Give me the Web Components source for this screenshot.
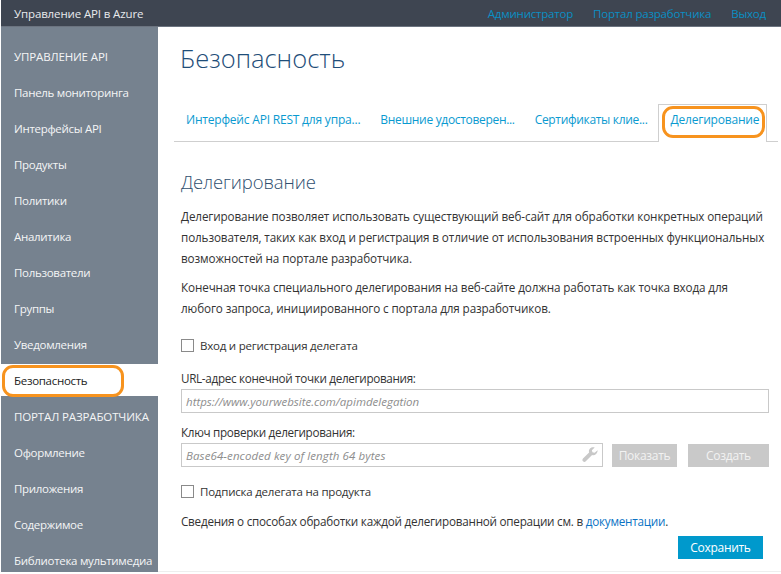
<!DOCTYPE html>
<html lang="ru"><head><meta charset="utf-8"><title>Безопасность</title>
<style>
html,body{margin:0;padding:0;background:#fff;overflow:hidden}
body{width:781px;height:574px;font-family:"Open Sans","Noto Sans",sans-serif;font-size:12px;color:#333}
</style></head><body>
<api-app></api-app>
<script>
function def(name, html){
  customElements.define(name, class extends HTMLElement{
    constructor(){super();const t=document.createElement('template');t.innerHTML=html;this.attachShadow({mode:'open'}).appendChild(t.content.cloneNode(true));}
  });
}
def('top-bar',`<style>
:host{display:flex;justify-content:space-between;align-items:center;height:26px;background:#3e4551;border-bottom:1px solid #6c7480;padding:0 15px 0 13px;font-size:11.5px;letter-spacing:-.13px;color:#e8eaed;margin-left:1px;box-sizing:content-box}
nav{display:flex;gap:20px;color:#0a8fc4;letter-spacing:-.2px}
</style><span>Управление API в Azure</span><nav><span>Администратор</span><span>Портал разработчика</span><span>Выход</span></nav>`);
def('side-nav',`<style>
:host{display:block;width:157px;margin-left:1px;height:545px;background:#76828f;color:#f4f5f6;font-size:11.5px;letter-spacing:-.3px;overflow:hidden;padding-top:12px;box-sizing:border-box}
div{height:36px;line-height:36px;padding-left:13px;white-space:nowrap}
.h{letter-spacing:-.13px}
.a{background:#fff;color:#222;height:32px;line-height:34px;margin-top:1px;margin-bottom:3px;position:relative}
.a i{position:absolute;left:1px;top:1px;width:116px;height:26px;border:3px solid #f7931e;border-radius:11px}
</style>
<div class="h">УПРАВЛЕНИЕ API</div><div>Панель мониторинга</div><div>Интерфейсы API</div><div>Продукты</div><div>Политики</div><div>Аналитика</div><div>Пользователи</div><div>Группы</div><div>Уведомления</div>
<div class="a">Безопасность<i></i></div>
<div class="h">ПОРТАЛ РАЗРАБОТЧИКА</div><div>Оформление</div><div>Приложения</div><div>Содержимое</div><div>Библиотека мультимедиа</div>`);
def('tab-strip',`<style>
:host{display:flex;gap:20px;height:37px;border-bottom:1px solid #cfcfcf;margin:0 3px 0 16px;padding-left:12px;font-size:12px;letter-spacing:-.2px;color:#0a9ad0;box-sizing:content-box}
span{display:block;line-height:31px;white-space:nowrap}
.t{border:1px solid #cfcfcf;border-bottom:0;background:#fff;height:38px;margin:0 0 -1px -9px;box-sizing:border-box;padding:0 7px 0 11px;line-height:30px;position:relative}
.t i{position:absolute;left:3px;top:1px;width:97px;height:26px;border:3px solid #f7931e;border-radius:11px}
</style>
<span>Интерфейс API REST для упра...</span><span style="letter-spacing:-.32px">Внешние удостоверен...</span><span style="letter-spacing:-.32px">Сертификаты клие...</span><span class="t">Делегирование<i></i></span>`);
def('check-row',`<style>
:host{display:flex;align-items:center;gap:6px;height:16px;font-size:11.5px;letter-spacing:-.22px}
b{width:11px;height:11px;border:1px solid #8a8a8a;background:#fff;display:block}
</style><b></b><slot></slot>`);
def('text-box',`<style>
:host{display:flex;align-items:center;box-sizing:border-box;height:24px;border:1px solid #c9c9c9;padding:0 4px;font-style:italic;color:#8d8d8d;font-size:11.5px;letter-spacing:.05px}
span{flex:1}
</style><span><slot></slot></span><slot name="icon"></slot>`);
def('flat-btn',`<style>
:host{display:flex;align-items:center;justify-content:center;height:23px;background:#c9c9c9;color:#f2f2f2;font-size:12px;letter-spacing:-.3px}
</style><slot></slot>`);
def('del-form',`<style>
:host{display:block;padding:0 12px 0 23px;font-size:11.7px;letter-spacing:-.12px;color:#333}
h2{font-weight:300;font-size:18.5px;letter-spacing:-.1px;color:#2f4f6f;margin:0;line-height:26px;padding-top:27px}
p{margin:0;line-height:21px;white-space:nowrap}
.p1{margin-top:11px}.p2{margin-top:8px}
check-row{margin-top:18px}
label{display:block;margin:11px 0 3px;line-height:16px;letter-spacing:-.32px}
.key{display:flex}
.key text-box{flex:none;width:422px;margin-right:9px}
.key flat-btn{margin-top:1px}
a{color:#0a73c4}
.save{display:flex;justify-content:flex-end;padding-right:6px;margin-top:7px}
.info{margin-top:14px;line-height:16px;white-space:nowrap;letter-spacing:-.24px}
</style>
<h2>Делегирование</h2>
<p class="p1">Делегирование позволяет использовать существующий веб-сайт для обработки конкретных операций<br>пользователя, таких как вход и регистрация в отличие от использования встроенных функциональных<br>возможностей на портале разработчика.</p>
<p class="p2">Конечная точка специального делегирования на веб-сайте должна работать как точка входа для<br>любого запроса, инициированного с портала для разработчиков.</p>
<check-row>Вход и регистрация делегата</check-row>
<label style="margin-top:17px">URL-адрес конечной точки делегирования:</label>
<text-box style="letter-spacing:0">https://www.yourwebsite.com/apimdelegation</text-box>
<label>Ключ проверки делегирования:</label>
<div class="key"><text-box style="letter-spacing:.1px">Base64-encoded key of length 64 bytes<svg slot="icon" width="16" height="16" viewBox="0 0 16 16"><path fill="#c8c8c8" d="M15.6 3.2l-3 2.6-2.2-.5-.5-2 2.8-2.8C11 0 9.2.3 8 1.500 6.900 2.600 6.700 4.100 7.100 5.400L1 11.500c-.8.800-.8 2 0 2.800.8.8 2 .8 2.800 0l6.300-6.300c1.300.4 2.900.1 4-1 1.100-1.100 1.700-3 1.500-3.800z"/></svg></text-box><flat-btn style="width:65px;margin-right:11px">Показать</flat-btn><flat-btn style="width:81px">Создать</flat-btn></div>
<check-row style="margin-top:16px">Подписка делегата на продукта</check-row>
<div class="info">Сведения о способах обработки каждой делегированной операции см. в <a>документации</a>.</div>
<div class="save"><flat-btn style="width:85px;background:#0099cc;color:#fff">Сохранить</flat-btn></div>`);
def('api-app',`<style>
:host{display:block;width:781px;height:574px}
.row{display:flex;height:547px}
main{flex:1;min-width:0;box-sizing:border-box;border-bottom:1px solid #eee;height:545px;overflow:hidden}
h1{margin:0;font-weight:300;font-size:25.5px;letter-spacing:0;color:#1f4e79;line-height:36px;padding:13px 0 0 22px}
tab-strip{margin-top:28px}
</style>
<top-bar></top-bar>
<div class="row"><side-nav></side-nav><main><h1>Безопасность</h1><tab-strip></tab-strip><del-form></del-form></main></div>`);
</script></body></html>
